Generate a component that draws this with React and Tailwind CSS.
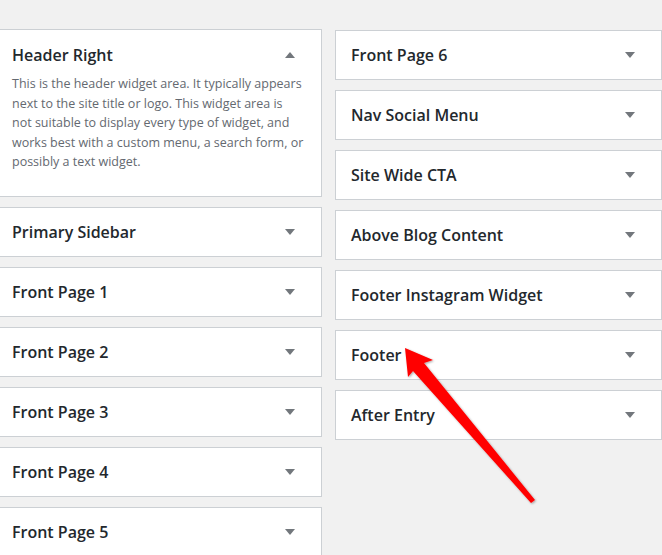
import React from "react";

const font = { fontFamily: '"Open Sans", "Noto Sans", sans-serif' };

function Caret({ up }) {
  return up ? (
    <span className="block w-0 h-0 border-l-[5px] border-r-[5px] border-b-[6px] border-l-transparent border-r-transparent border-b-[#72777c]" />
  ) : (
    <span className="block w-0 h-0 border-l-[5px] border-r-[5px] border-t-[6px] border-l-transparent border-r-transparent border-t-[#72777c]" />
  );
}

function Area({ title }) {
  return (
    <div className="h-[50px] bg-white border border-[#ccd0d4] flex items-center justify-between pl-[15px] pr-[26px]">
      <span className="text-[16px] font-semibold text-[#23282d]">{title}</span>
      <Caret />
    </div>
  );
}

export default function App() {
  const left = ["Primary Sidebar", "Front Page 1", "Front Page 2", "Front Page 3", "Front Page 4", "Front Page 5"];
  const right = ["Front Page 6", "Nav Social Menu", "Site Wide CTA", "Above Blog Content", "Footer Instagram Widget", "Footer", "After Entry"];
  const desc = [
    "This is the header widget area. It typically appears",
    "next to the site title or logo. This widget area is",
    "not suitable to display every type of widget, and",
    "works best with a custom menu, a search form, or",
    "possibly a text widget.",
  ];

  return (
    <div className="relative w-[662px] h-[555px] overflow-hidden bg-[#f1f1f1]" style={font}>
      <div className="flex gap-[13px] pt-[29px]">
        <div className="ml-[-4px] w-[326px] shrink-0 flex flex-col gap-[10px]">
          <div className="bg-white border border-[#ccd0d4] pl-[15px] pr-[26px] pt-[13px] pb-[24px]">
            <div className="flex items-center justify-between">
              <span className="text-[16px] font-semibold text-[#23282d]">Header Right</span>
              <Caret up />
            </div>
            <p className="mt-[7px] text-[12.5px] leading-[19.6px] text-[#646970] whitespace-nowrap">
              {desc.map((l, i) => (
                <span key={i} className="block">{l}</span>
              ))}
            </p>
          </div>
          {left.map((t) => (
            <Area key={t} title={t} />
          ))}
        </div>
        <div className="mt-[1px] w-[327px] shrink-0 flex flex-col gap-[10px]">
          {right.map((t) => (
            <Area key={t} title={t} />
          ))}
        </div>
      </div>

      {/* red arrow pointing at Footer */}
      <svg className="absolute left-0 top-0" width="662" height="555" viewBox="0 0 662 555">
        <defs>
          <filter id="sh" x="-20%" y="-20%" width="140%" height="140%">
            <feDropShadow dx="1" dy="1" stdDeviation="1.2" floodColor="#000" floodOpacity="0.35" />
          </filter>
        </defs>
        <polygon
          points="405,348 433,360 424,363 535,500 531,503 413,371 408,377"
          fill="#ff0000"
          filter="url(#sh)"
        />
      </svg>
    </div>
  );
}
